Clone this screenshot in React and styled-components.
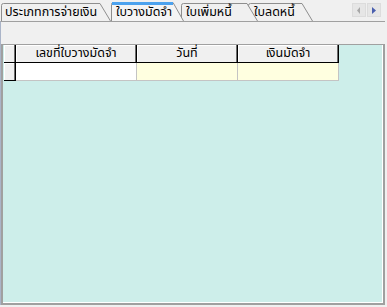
import styled, { createGlobalStyle } from "styled-components";

const Global = createGlobalStyle`
    body {
        margin: 0;
        background: #f0f0f0;
        font-family: Tahoma, "Noto Sans Thai", "DejaVu Sans", "Noto Sans", sans-serif;
        font-size: 12.5px;
        color: #000;
    }
`
const Window = styled.div`
    width: 385px;
    height: 305px;
    display: flex;
    flex-direction: column;
`
const Strip = styled.div`
    height: 21px;
    display: flex;
    align-items: flex-end;
    padding-left: 1px;
`
const Tab = styled.div`
    position: relative;
    flex: none;
    width: ${props => props.w}px;
    height: ${props => props.active ? 19 : 18}px;
    margin-left: ${props => props.shift}px;
    z-index: ${props => props.z};
    padding-left: ${props => props.pad}px;
    box-sizing: border-box;
    display: flex;
    align-items: center;
    white-space: nowrap;
`
const TabShape = styled.svg`
    position: absolute;
    left: 0;
    top: 0;
    z-index: -1;
    overflow: visible;
`
const Label = styled.span`
    position: relative;
    line-height: 16px;
    padding-top: ${props => props.active ? 2 : 1}px;
`
const Scroller = styled.div`
    margin-left: auto;
    margin-right: 4px;
    align-self: flex-start;
    margin-top: 3px;
    display: flex;
    gap: 1px;
`
const ScrollBtn = styled.div`
    width: 14px;
    height: 14px;
    box-sizing: border-box;
    border: 1px solid #dcdcdc;
    background: #e6e6e6;
    display: flex;
    align-items: center;
    justify-content: center;
`
const Panel = styled.div`
    flex: 1;
    display: flex;
    flex-direction: column;
    border-top: 1px solid #a0a0a0;
    border-left: 1px solid #aab4c8;
    padding-top: 22px;
`
const Grid = styled.div`
    flex: 1;
    background: #cdeeea;
    border-top: 1px solid #a0a0a0;
    border-left: 2px solid #a0a0a0;
    border-right: 2px solid #a0a0a0;
    border-bottom: 2px solid #a0a0a0;
    box-shadow: inset -1px -1px 0 #fff;
    padding-left: 1px;
`
const Table = styled.div`
    display: grid;
    grid-template-columns: 12px 121px 101px 101px;
    grid-auto-rows: 18px;
`
const HeadCell = styled.div`
    background: #f0f0f0;
    border-right: 1px solid #000;
    border-bottom: 1px solid #000;
    box-shadow: inset -1px 0 0 #6d6d6d, inset 1px 1px 0 #fff;
    display: flex;
    align-items: center;
    justify-content: center;
    line-height: 16px;
    padding-top: 1px;
    white-space: nowrap;
`
const Cell = styled.div`
    background: ${props => props.bg};
    border-right: 1px solid #c4c4c4;
    border-bottom: 1px solid #c4c4c4;
`

const tabs = [
    { label: "ประเภทการจ่ายเงิน", w: 110, shift: 0, pad: 4 },
    { label: "ใบวางมัดจำ", w: 73, shift: 0, pad: 5, active: true },
    { label: "ใบเพิ่มหนี้", w: 77, shift: -3, pad: 5 },
    { label: "ใบลดหนี้", w: 65, shift: -10, pad: 6 },
]

const columns = [
    { title: "เลขที่ใบวางมัดจำ", bg: "#ffffff" },
    { title: "วันที่", bg: "#ffffe0" },
    { title: "เงินมัดจำ", bg: "#ffffe0" },
]

const TabOutline = ({ w, active }) => {
    const h = active ? 19 : 18
    const d = `M0.5,${h} V2.5 Q0.5,0.5 2.5,0.5 H${w - 11} L${w - 0.5},${h}`
    return (
        <TabShape width={w} height={h}>
            <path d={d} fill={active ? "#f4f4f4" : "#f0f0f0"} stroke="#8e8e8e" />
            {active && <rect x="1" y="0" width={w - 12} height="3" fill="#4ca2ee" />}
        </TabShape>
    )
}

const App = () => {
    return (
        <Window>
            <Global />
            <Strip>
                {tabs.map((t, i) => (
                    <Tab key={t.label} w={t.w} shift={t.shift} pad={t.pad} active={t.active} z={t.active ? 10 : 5 - i}>
                        <TabOutline w={t.w} active={t.active} />
                        <Label active={t.active}>{t.label}</Label>
                    </Tab>
                ))}
                <Scroller>
                    <ScrollBtn>
                        <svg width="4" height="7"><path d="M3,0 V7 L0,3.5 Z" fill="#a8a8a8" /></svg>
                    </ScrollBtn>
                    <ScrollBtn>
                        <svg width="4" height="7"><path d="M0,0 V7 L4,3.5 Z" fill="#4a5fae" /></svg>
                    </ScrollBtn>
                </Scroller>
            </Strip>
            <Panel>
                <Grid>
                    <Table>
                        <HeadCell />
                        {columns.map(c => <HeadCell key={c.title}>{c.title}</HeadCell>)}
                        <HeadCell />
                        {columns.map(c => <Cell key={c.title} bg={c.bg} />)}
                    </Table>
                </Grid>
            </Panel>
        </Window>
    )
}

export default App
